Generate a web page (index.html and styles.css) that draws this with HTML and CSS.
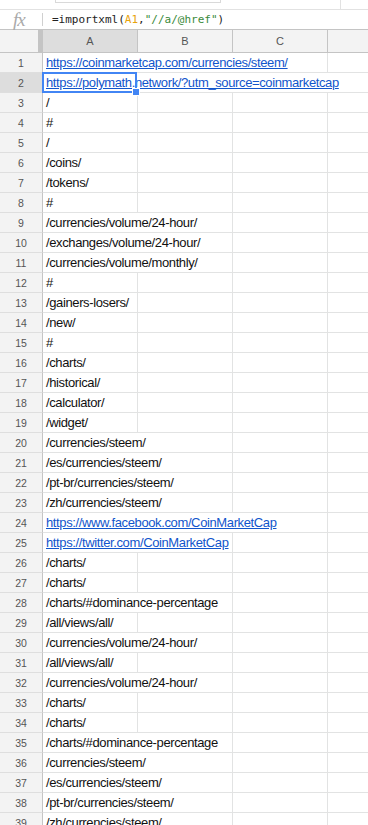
FILE: index.html
```html
<!DOCTYPE html>
<html>
<head>
<meta charset="utf-8">
<title>importxml</title>
<link rel="stylesheet" href="styles.css">
</head>
<body>
<div class="toolbar">
  <span class="namebox"></span>
  <span class="tooldiv"></span>
</div>
<div class="formulabar">
  <span class="fx">fx</span>
  <span class="fsep"></span>
  <span class="formula">=importxml(<span class="ref">A1</span>,<span class="str">"//a/@href"</span>)</span>
</div>
<table class="grid">
  <thead>
    <tr>
      <th class="corner"></th>
      <th class="active">A</th>
      <th>B</th>
      <th>C</th>
      <th></th>
    </tr>
  </thead>
  <tbody>
    <tr><th>1</th><td colspan="3"><a href="#">https://coinmarketcap.com/currencies/steem/</a></td><td></td></tr>
    <tr><th class="active">2</th><td colspan="4" class="sel"><a href="#">https://polymath.network/?utm_source=coinmarketcap</a><span class="box"></span></td></tr>
    <tr><th>3</th><td>/</td><td></td><td></td><td></td></tr>
    <tr><th>4</th><td>#</td><td></td><td></td><td></td></tr>
    <tr><th>5</th><td>/</td><td></td><td></td><td></td></tr>
    <tr><th>6</th><td>/coins/</td><td></td><td></td><td></td></tr>
    <tr><th>7</th><td>/tokens/</td><td></td><td></td><td></td></tr>
    <tr><th>8</th><td>#</td><td></td><td></td><td></td></tr>
    <tr><th>9</th><td colspan="2">/currencies/volume/24-hour/</td><td></td><td></td></tr>
    <tr><th>10</th><td colspan="2">/exchanges/volume/24-hour/</td><td></td><td></td></tr>
    <tr><th>11</th><td colspan="2">/currencies/volume/monthly/</td><td></td><td></td></tr>
    <tr><th>12</th><td>#</td><td></td><td></td><td></td></tr>
    <tr><th>13</th><td>/gainers-losers/</td><td></td><td></td><td></td></tr>
    <tr><th>14</th><td>/new/</td><td></td><td></td><td></td></tr>
    <tr><th>15</th><td>#</td><td></td><td></td><td></td></tr>
    <tr><th>16</th><td>/charts/</td><td></td><td></td><td></td></tr>
    <tr><th>17</th><td>/historical/</td><td></td><td></td><td></td></tr>
    <tr><th>18</th><td>/calculator/</td><td></td><td></td><td></td></tr>
    <tr><th>19</th><td>/widget/</td><td></td><td></td><td></td></tr>
    <tr><th>20</th><td colspan="2">/currencies/steem/</td><td></td><td></td></tr>
    <tr><th>21</th><td colspan="2">/es/currencies/steem/</td><td></td><td></td></tr>
    <tr><th>22</th><td colspan="2">/pt-br/currencies/steem/</td><td></td><td></td></tr>
    <tr><th>23</th><td colspan="2">/zh/currencies/steem/</td><td></td><td></td></tr>
    <tr><th>24</th><td colspan="3"><a href="#">https://www.facebook.com/CoinMarketCap</a></td><td></td></tr>
    <tr><th>25</th><td colspan="2"><a href="#">https://twitter.com/CoinMarketCap</a></td><td></td><td></td></tr>
    <tr><th>26</th><td>/charts/</td><td></td><td></td><td></td></tr>
    <tr><th>27</th><td>/charts/</td><td></td><td></td><td></td></tr>
    <tr><th>28</th><td colspan="2">/charts/#dominance-percentage</td><td></td><td></td></tr>
    <tr><th>29</th><td>/all/views/all/</td><td></td><td></td><td></td></tr>
    <tr><th>30</th><td colspan="2">/currencies/volume/24-hour/</td><td></td><td></td></tr>
    <tr><th>31</th><td>/all/views/all/</td><td></td><td></td><td></td></tr>
    <tr><th>32</th><td colspan="2">/currencies/volume/24-hour/</td><td></td><td></td></tr>
    <tr><th>33</th><td>/charts/</td><td></td><td></td><td></td></tr>
    <tr><th>34</th><td>/charts/</td><td></td><td></td><td></td></tr>
    <tr><th>35</th><td colspan="2">/charts/#dominance-percentage</td><td></td><td></td></tr>
    <tr><th>36</th><td colspan="2">/currencies/steem/</td><td></td><td></td></tr>
    <tr><th>37</th><td colspan="2">/es/currencies/steem/</td><td></td><td></td></tr>
    <tr><th>38</th><td colspan="2">/pt-br/currencies/steem/</td><td></td><td></td></tr>
    <tr><th>39</th><td colspan="2">/zh/currencies/steem/</td><td></td><td></td></tr>
  </tbody>
</table>
</body>
</html>
```

FILE: styles.css
```css
html, body {
  margin: 0;
  padding: 0;
  background: #fff;
  overflow: hidden;
  font-family: 'Liberation Sans', Arial, sans-serif;
}

.toolbar {
  position: relative;
  height: 9px;
  border-bottom: 1px solid #e2e2e2;
}

.namebox {
  position: absolute;
  left: 55px;
  top: 0;
  width: 164px;
  height: 2px;
  border: 1px solid #d9d9d9;
  border-top: 0;
}

.tooldiv {
  position: absolute;
  left: 340px;
  top: 0;
  width: 1px;
  height: 9px;
  background: #e2e2e2;
}

.formulabar {
  display: flex;
  align-items: center;
  height: 19px;
}

.fx {
  width: 42px;
  padding-left: 13px;
  box-sizing: border-box;
  font-family: 'Liberation Serif', serif;
  font-style: italic;
  font-size: 19px;
  color: #aaa;
  letter-spacing: -1px;
}

.fsep {
  width: 1px;
  height: 13px;
  background: #d0d0d0;
  margin-right: 9px;
}

.formula {
  font-family: 'DejaVu Sans Mono', 'Liberation Mono', monospace;
  font-size: 11px;
  color: #222;
}

.formula .ref {
  color: #e8a30c;
}

.formula .str {
  color: #3a8a3a;
}

.grid {
  border-collapse: separate;
  border-spacing: 0;
  table-layout: fixed;
  width: 423px;
  border-top: 1px solid #c4c4c4;
}

.grid th,
.grid td {
  box-sizing: border-box;
  padding: 0 3px 2px;
  height: 20px;
  border-right: 1px solid #e2e3e3;
  border-bottom: 1px solid #e2e3e3;
  white-space: nowrap;
  overflow: visible;
}

.grid thead th {
  height: 23px;
  width: 95px;
  background: #f3f3f3;
  border-right: 1px solid #c4c4c4;
  border-bottom: 1px solid #c4c4c4;
  font-weight: normal;
  font-size: 11px;
  color: #555;
  vertical-align: middle;
  padding: 0;
}

.grid thead th.corner {
  width: 43px;
  border-right: 5px solid #c4c4c4;
}

.grid tbody th {
  width: 43px;
  background: #f3f3f3;
  border-right: 1px solid #c4c4c4;
  border-bottom: 1px solid #dedede;
  font-weight: normal;
  font-size: 10.5px;
  color: #555;
  text-align: center;
  vertical-align: middle;
  padding: 0;
}

.grid .active,
.grid thead .active,
.grid tbody .active {
  background: #dddddd;
}

.grid td {
  font-size: 13px;
  letter-spacing: -0.38px;
  color: #111;
  vertical-align: bottom;
  line-height: 15px;
}

.grid td a {
  color: #1155cc;
  text-decoration: underline;
}

.grid td.sel {
  position: relative;
}

.box {
  position: absolute;
  left: -1px;
  top: -1px;
  width: 95px;
  height: 21px;
  box-sizing: border-box;
  border: 2px solid #4285f4;
}

.box::after {
  content: "";
  position: absolute;
  right: -5px;
  bottom: -5px;
  width: 6px;
  height: 6px;
  background: #4285f4;
  border: 1px solid #fff;
}
```
